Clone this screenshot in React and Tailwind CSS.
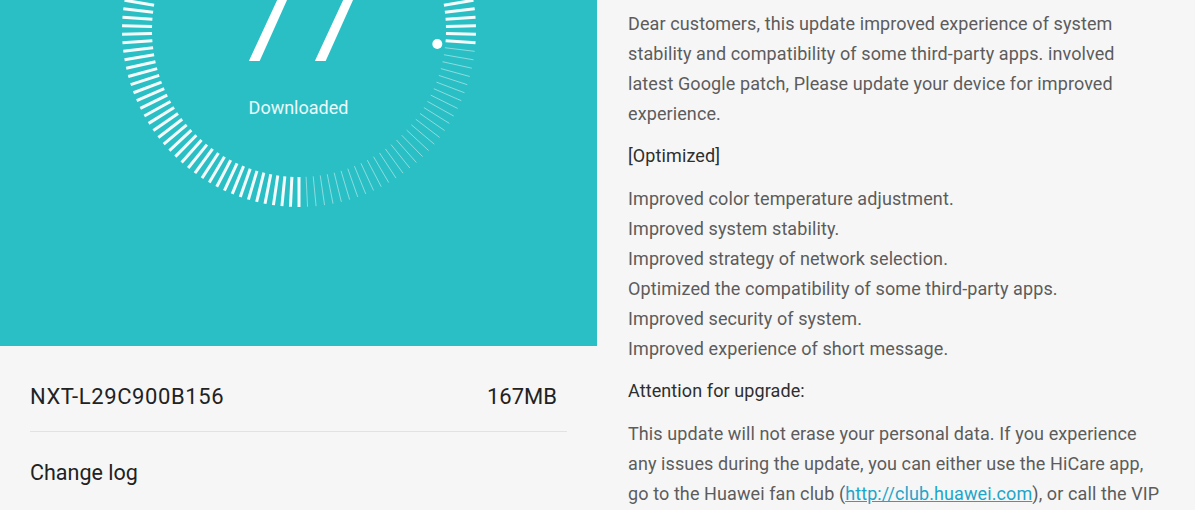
const TICKS = 130;
const PROGRESS = 0.766;
const CX = 299;
const CY = 30;
const R_OUT = 177;
const R_IN = 147;

function Gauge() {
  const ticks = [];
  for (let i = 0; i < TICKS; i++) {
    const sweep = (i * 360) / TICKS;
    const a = ((90 + sweep) * Math.PI) / 180;
    const on = sweep <= PROGRESS * 360;
    ticks.push(
      <line
        key={i}
        x1={CX + R_IN * Math.cos(a)}
        y1={CY + R_IN * Math.sin(a)}
        x2={CX + R_OUT * Math.cos(a)}
        y2={CY + R_OUT * Math.sin(a)}
        stroke="#ffffff"
        strokeWidth={on ? 3 : 1}
        strokeOpacity={on ? 0.95 : 0.45}
      />
    );
  }
  const end = ((90 + PROGRESS * 360) * Math.PI) / 180;
  return (
    <svg className="absolute inset-0" width="597" height="346" viewBox="0 0 597 346">
      {ticks}
      <circle cx={CX + 139 * Math.cos(end)} cy={CY + 139 * Math.sin(end)} r="5" fill="#ffffff" />
    </svg>
  );
}

const intro = [
  'Dear customers, this update improved experience of system',
  'stability and compatibility of some third-party apps. involved',
  'latest Google patch, Please update your device for improved',
  'experience.',
];

const optimized = [
  'Improved color temperature adjustment.',
  'Improved system stability.',
  'Improved strategy of network selection.',
  'Optimized the compatibility of some third-party apps.',
  'Improved security of system.',
  'Improved experience of short message.',
];

export default function App() {
  return (
    <div className="flex w-[1195px] h-[510px] overflow-hidden bg-[#f6f6f6] font-['Roboto',sans-serif]">
      {/* left: download status */}
      <div className="w-[597px] shrink-0 flex flex-col">
        <div className="relative h-[346px] bg-[#2abfc5] overflow-hidden">
          <Gauge />
          <div className="relative flex flex-col items-center">
            <div className="mt-[-33px] ml-[4px] text-[112px] leading-none text-white tracking-[3px]">77</div>
            <div className="mt-[17px] text-[18px] leading-[24px] text-white/90">Downloaded</div>
          </div>
        </div>
        <div className="flex items-center justify-between pl-[30px] pr-[40px] pt-[36px] pb-[19px] text-[22px] leading-[30px] text-[#222]">
          <span className="tracking-[0.6px]">NXT-L29C900B156</span>
          <span>167MB</span>
        </div>
        <div className="mx-[30px] h-px bg-[#e2e2e2]" />
        <div className="px-[30px] mt-[26px] text-[21.5px] leading-[30px] text-[#222]">Change log</div>
      </div>

      {/* right: change log */}
      <div className="flex-1 pl-[31px] pt-[9px] text-[18px] leading-[30px] text-[#5c5c5c] whitespace-nowrap tracking-[0.1px]">
        <div>
          {intro.map((l) => (
            <div key={l}>{l}</div>
          ))}
        </div>
        <div className="mt-[12px] text-[#2e2e2e]">[Optimized]</div>
        <div className="mt-[13px]">
          {optimized.map((l) => (
            <div key={l}>{l}</div>
          ))}
        </div>
        <div className="mt-[12px] text-[#2e2e2e]">Attention for upgrade:</div>
        <div className="mt-[13px]">
          <div>This update will not erase your personal data. If you experience</div>
          <div>any issues during the update, you can either use the HiCare app,</div>
          <div>
            go to the Huawei fan club (
            <span className="text-[#1fa5c9] underline">http://club.huawei.com</span>
            ), or call the VIP
          </div>
        </div>
      </div>
    </div>
  );
}
